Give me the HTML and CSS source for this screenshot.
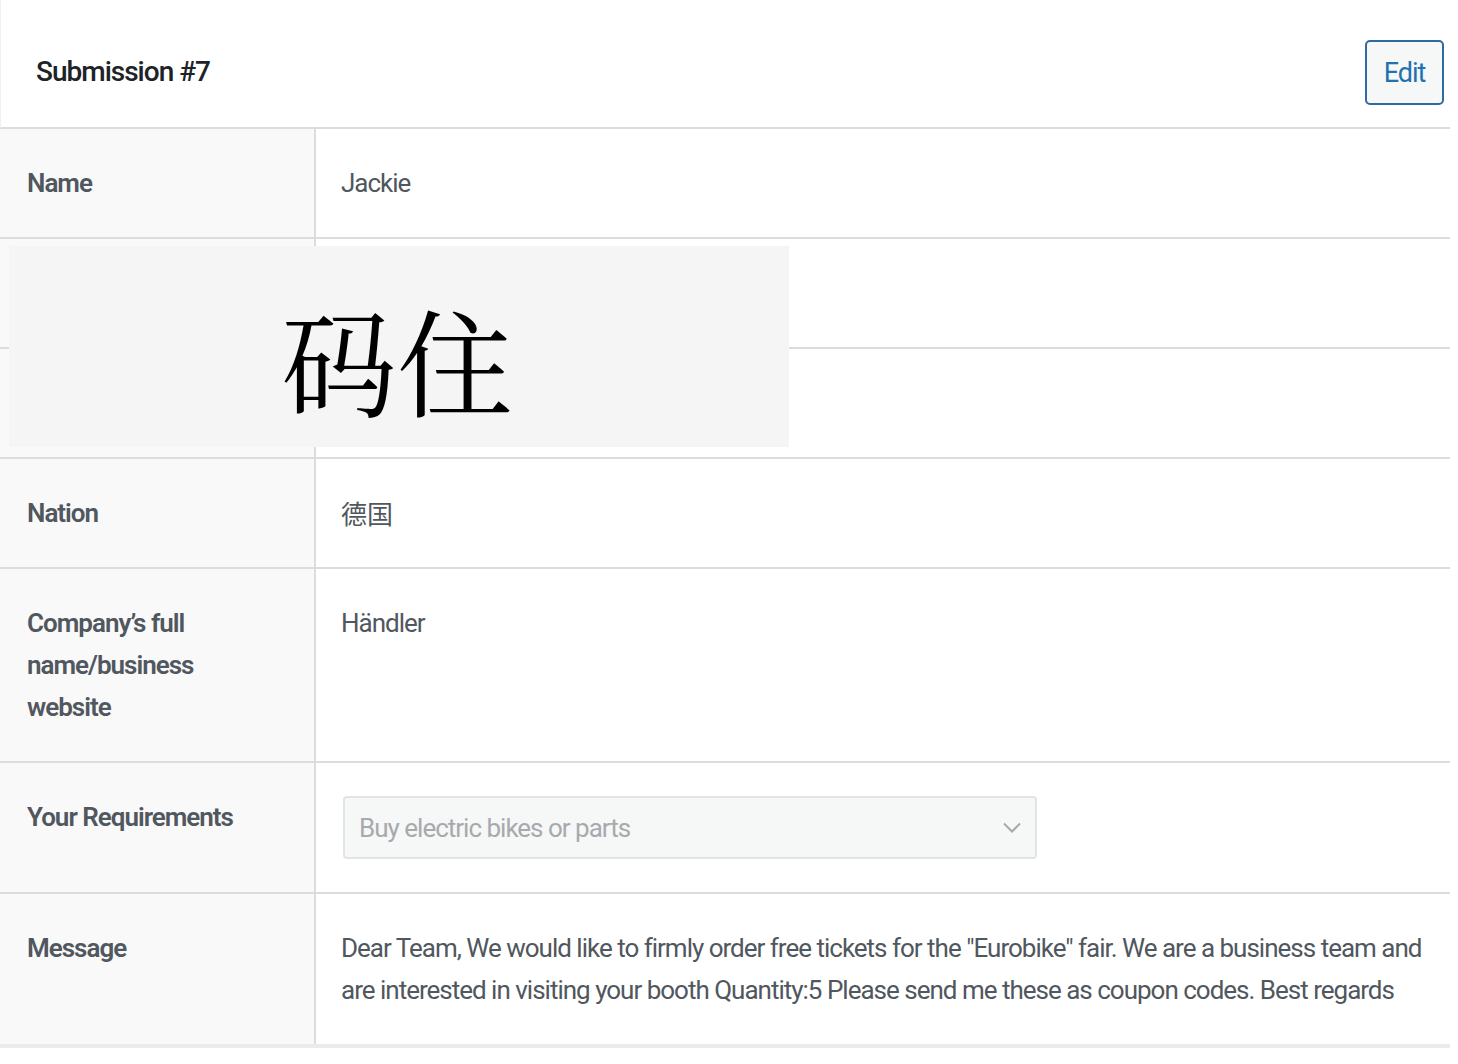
FILE: index.html
```html
<!DOCTYPE html>
<html>
<head>
  <title>Submission #7</title>
  <link rel="stylesheet" href="styles.css">
</head>
<body>
  <div class="submission">
    <div class="submission-header">
      <h2>Submission #7</h2>
      <button class="edit-btn">Edit</button>
    </div>

    <table class="submission-table">
      <colgroup>
        <col class="label-col">
        <col>
      </colgroup>
      <tbody>
        <tr>
          <th>Name</th>
          <td>Jackie</td>
        </tr>
        <tr>
          <th>Email</th>
          <td>&nbsp;</td>
        </tr>
        <tr>
          <th>Phone</th>
          <td>&nbsp;</td>
        </tr>
        <tr>
          <th>Nation</th>
          <td class="cjk">德国</td>
        </tr>
        <tr>
          <th>Company’s full name/business website</th>
          <td>Händler</td>
        </tr>
        <tr>
          <th>Your Requirements</th>
          <td>
            <div class="fake-select">
              <span>Buy electric bikes or parts</span>
              <svg width="18" height="11" viewBox="0 0 18 11"><path d="M1 1.5 L9 9.5 L17 1.5" fill="none" stroke="#a7aaad" stroke-width="2"/></svg>
            </div>
          </td>
        </tr>
        <tr>
          <th>Message</th>
          <td>Dear Team, We would like to firmly order free tickets for the "Eurobike" fair. We are a business team and are interested in visiting your booth Quantity:5 Please send me these as coupon codes. Best regards</td>
        </tr>
      </tbody>
    </table>

    <!-- наклейка поверх скриншота -->
    <div class="sticker">码住</div>
  </div>
</body>
</html>
```

FILE: styles.css
```css
body {
  margin: 0;
  background: #fff;
  font-family: Roboto, "Noto Sans CJK SC", sans-serif;
  letter-spacing: -1px;
}

.submission {
  position: relative;
  width: 1450px;
}

.submission-header {
  display: flex;
  align-items: center;
  justify-content: space-between;
  height: 111px;
  padding: 16px 6px 0 35px;
  border-left: 1px solid #f0f0f1;
  border-bottom: 2px solid #dcdcde;
}

.submission-header h2 {
  margin: 0;
  font-size: 28px;
  font-weight: 500;
  color: #1d2327;
}

.edit-btn {
  width: 79px;
  height: 65px;
  margin-top: 2px;
  font-family: inherit;
  font-size: 27px;
  letter-spacing: -1px;
  color: #2271b1;
  background: #f6f7f7;
  border: 2px solid #2f6aa3;
  border-radius: 5px;
}

.submission-table {
  width: 100%;
  table-layout: fixed;
  border-collapse: collapse;
}

.label-col {
  width: 315px;
}

.submission-table th,
.submission-table td {
  padding: 33px 12px 33px 25px;
  font-size: 26px;
  line-height: 42px;
  text-align: left;
  vertical-align: top;
  border-bottom: 2px solid #dcdcde;
}

.submission-table th {
  font-weight: 600;
  color: #50575e;
  background: #f9f9f9;
  border-right: 2px solid #dcdcde;
  padding-left: 27px;
  padding-right: 44px;
}

.submission-table td {
  font-weight: 400;
  color: #50575e;
}

.submission-table tr:last-child th,
.submission-table tr:last-child td {
  border-bottom: 4px solid #ebebeb;
}

.cjk {
  font-family: "Noto Sans CJK SC", sans-serif;
  letter-spacing: 0;
}

.fake-select {
  display: flex;
  align-items: center;
  justify-content: space-between;
  width: 694px;
  height: 63px;
  margin-left: 2px;
  box-sizing: border-box;
  padding: 0 14px 0 14px;
  color: #a7aaad;
  background: #f6f7f7;
  border: 2px solid #e2e4e7;
  border-radius: 4px;
}

.sticker {
  position: absolute;
  left: 9px;
  top: 246px;
  width: 780px;
  height: 201px;
  display: flex;
  align-items: center;
  box-sizing: border-box;
  padding: 22px 0 0 272px;
  background: #f6f5f6;
  font-family: "Noto Serif CJK SC", "Noto Sans CJK SC", serif;
  font-size: 116px;
  font-weight: 400;
  letter-spacing: 0;
  color: #000;
}
```
